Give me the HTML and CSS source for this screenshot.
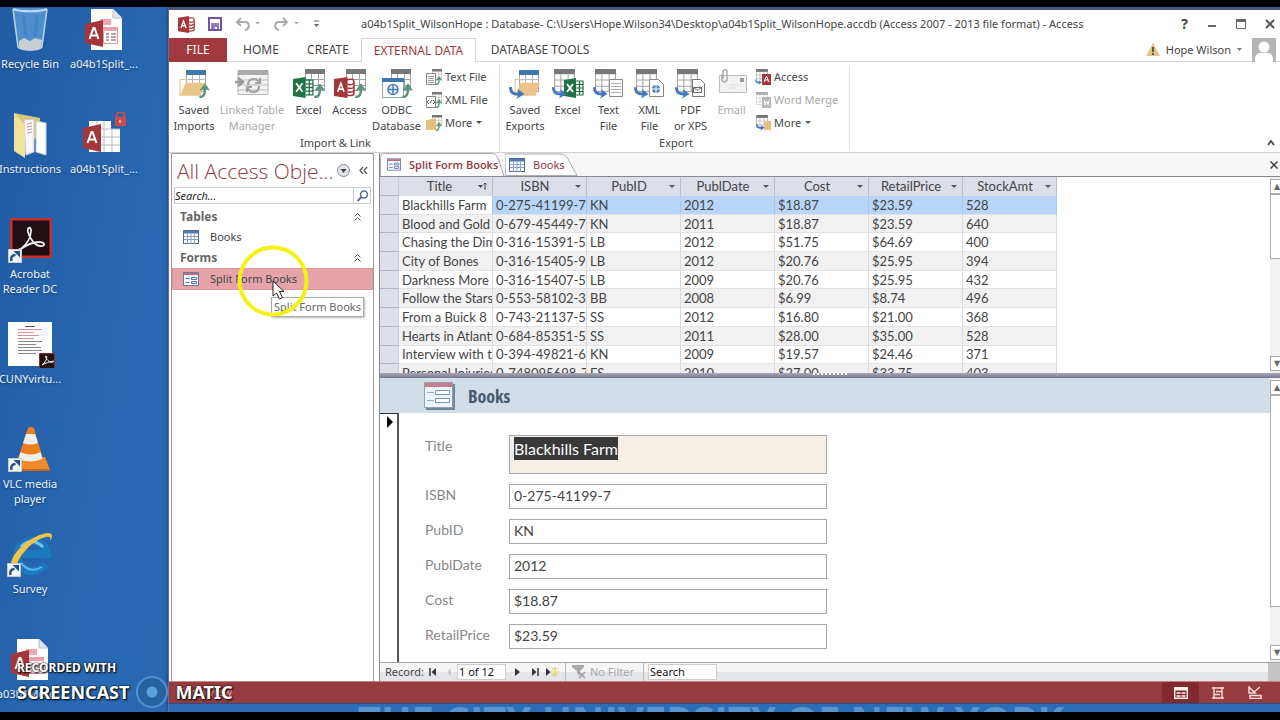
FILE: index.html
```html
<!DOCTYPE html>
<html lang="en">
<head>
<meta charset="utf-8">
<title>a04b1Split_WilsonHope - Access</title>
<link rel="stylesheet" href="styles.css">
</head>
<body>
<svg class="defs" aria-hidden="true">
  <symbol id="grid" viewBox="0 0 20 24"><rect x=".5" y=".5" width="19" height="21" fill="#fff" stroke="#a3a3a3"/><path d="M0 0h20v5H0z" fill="#777"/><path d="M0 10.500h20M0 16.500h20M6.500 5v17M13.500 5v17" stroke="#a3a3a3" fill="none"/></symbol>
  <symbol id="grid-blue" viewBox="0 0 20 24"><rect x=".5" y=".5" width="19" height="21" fill="#fff" stroke="#a3a3a3"/><path d="M0 0h20v5H0z" fill="#3f78ae"/><path d="M0 9.500h20M0 14.500h20M6.500 5v17M13.500 5v17" stroke="#b5b9c4" fill="none"/></symbol>
  <symbol id="up" viewBox="0 0 12 16"><path d="M1 15c5 0 6-3 6-9" stroke="#559578" stroke-width="2.600" fill="none"/><path d="M2 7.500 7 1l4.500 6.500-4-1.500z" fill="#559578" stroke="#559578"/></symbol>
  <symbol id="out" viewBox="0 0 16 13"><path d="M1.500 1c0 6 3 7.500 9 7" stroke="#4378c0" stroke-width="3" fill="none"/><path d="M8.500 3l7 5-8 5 2-5z" fill="#4378c0"/></symbol>
  <symbol id="abox" viewBox="0 0 20 20"><path d="M11 3c7-2 8 0 8 1v12c0 2-5 2-8 1" fill="#fff" stroke="#a4373a" stroke-width="1.500"/><path d="M13 7c3 1 5 0 6-1M13 10.500c3 1 5 0 6-1M13 14c3 1 5 0 6-1" stroke="#a4373a" fill="none" stroke-width="1.500"/><path d="M0 2 13 0v20L0 18z" fill="#a4373a"/><path d="M3.500 14 6.500 6l3 8M4.500 11.500h4" stroke="#fff" stroke-width="1.600" fill="none"/></symbol>
  <symbol id="xbox" viewBox="0 0 20 20"><path d="M12 3h7v14h-7M15.500 3v14M12 6.500h7M12 10h7M12 13.500h7" stroke="#1f7345" fill="#fff" stroke-width="1.200"/><path d="M0 2 12 0v20L0 18z" fill="#1f7345"/><path d="m3 6 6 8M9 6l-6 8" stroke="#fff" stroke-width="1.800"/></symbol>
  <symbol id="folder" viewBox="0 0 24 18"><path d="M1 17V2h5l2 2" fill="none" stroke="#e4c48d"/><path d="M6 5h18l-4 12H1z" fill="#e9c58b"/></symbol>
  <symbol id="form" viewBox="0 0 16 14"><rect x=".5" y=".5" width="15" height="13" fill="#f7f9ff" stroke="#6c7898"/><path d="M1 1h14v2H1z" fill="#b76c80"/><path d="M2.500 6.500h4m-4 4h4" stroke="#5a74a8"/><path d="M8.500 5.500h5v2h-5zm0 4h5v2h-5z" fill="#fff" stroke="#5a74a8"/></symbol>
  <symbol id="table" viewBox="0 0 16 14"><rect x=".5" y=".5" width="15" height="13" fill="#fff" stroke="#54698f"/><path d="M1 1h14v2.500H1z" fill="#5379b4"/><path d="M1 6.500h14M1 9.500h14M4.500 3v11M8 3v11M11.500 3v11" stroke="#8ba3cb" fill="none"/></symbol>
  <symbol id="sc" viewBox="0 0 14 14"><path d="M.5.500h13v13H.5z" fill="#f3f5f7" stroke="#c5ccd5"/><path d="M3.500 12c-1-4 1-6 4-6" stroke="#285089" stroke-width="2.500" fill="none"/><path d="M5.500 2H12v6.500z" fill="#285089"/></symbol>
  <symbol id="adoc" viewBox="0 0 38 44"><path d="M6 1h22l9 9v32H6z" fill="#fff"/><path d="M28 1v9h9" fill="#dfe5ef" stroke="#b0b9c8"/><path d="M15 11h11v6H15z" fill="#f0a6ad"/><path d="M18.500 19.500h14v16h-14z" fill="#fff" stroke="#dc9aa1"/><path d="M18 19h15v4H18z" fill="#eaa0a9"/><path d="M21 26h3m-3 3h3m-3 3h3m2-6h5m-5 3h5m-5 3h5" stroke="#b07b82" stroke-width="1.500"/><path d="m0 16 18-4v27L0 35z" fill="#a4373a"/><path d="m4.500 31 4-11h1l4 11M6.500 27.500h5" stroke="#fff" stroke-width="2" fill="none"/></symbol>
</svg>

<div class="screen">
  <div class="desktop">
    <aside class="shortcuts">
      <div class="shortcut-col first">
        <a class="shortcut" href="#"><svg width="38" height="46" viewBox="0 0 38 46"><path d="m24 40 10-1 2-3-3-2z" fill="#174a86" opacity=".6"/><path d="M2 1h34l-5 40c-3 4-20 4-24 0z" fill="#5f9fd9" opacity=".75"/><path d="M2 2c8 3 26 3 34 0" fill="none" stroke="#bcdcf2" stroke-width="2"/><path d="m2 2 5 38c5 4 19 4 24 0l5-38" fill="none" stroke="#bad3e6" stroke-width="1.500"/><path d="m8 34 5-3 6 3 5-3 7 2-1 8c-5 3-17 3-22 0z" fill="#c7cfd5"/><path d="m12 8 3 22m11-22-2 22" stroke="#3c79c0" stroke-width="3" opacity=".6"/></svg><span>Recycle Bin</span></a>
        <a class="shortcut" href="#"><svg width="36" height="46" viewBox="0 0 36 46"><path d="m2 1 26 5v12L14 42z" fill="#ddc876"/><path d="m12 8 10-1v33l-8 3z" fill="#f7f7fa" stroke="#c8cad2"/><path d="m24 9 10 2v32l-10-3z" fill="#fff" stroke="#c6ccd8"/><path d="m15 12 5-1m-5 4 5-1m-5 4 5-1m-5 4 5-1" stroke="#c997a0"/><path d="m2 1 11 12v33L2 39z" fill="#f0e19b"/></svg><span>Instructions</span></a>
        <a class="shortcut" href="#"><svg width="46" height="46" viewBox="0 0 46 46"><path d="M3 1h42v40H3z" fill="#c7302e"/><path d="M5.500 3.500h37v35h-37z" fill="#220f13"/><path d="M14 32c5-4 10-11 10-18 0-5-4-4-3 1 2 8 8 15 14 14 4-1 2-4-3-4-6 0-11 2-18 7-3 2-3 0 0 0z" fill="none" stroke="#eee" stroke-width="1.800"/><use href="#sc" x="1" y="32" width="14" height="14"/></svg><span>Acrobat<br>Reader DC</span></a>
        <a class="shortcut" href="#"><svg width="50" height="46" viewBox="0 0 50 46"><path d="M3 0h44v44H3z" fill="#fdfdfd"/><path d="M20 4.500h10" stroke="#555"/><path d="M13 7.500h24m-24 3h16m-16 3h21m-21 3h16" stroke="#db8d94"/><path d="M13 19.500h24m-24 3h18m-18 3h23m-23 3h24m-24 3h18" stroke="#888"/><path d="M34.500 31.500h15v15h-15z" fill="#251213" stroke="#8c2d2e"/><path d="M37 43c4-3 6-9 4-9s3 8 7 6-6 0-11 3z" fill="none" stroke="#fff"/></svg><span>CUNYvirtu...</span></a>
        <a class="shortcut" href="#"><svg width="44" height="46" viewBox="0 0 44 46"><path d="m10 30-6 13h38l-5-13z" fill="#f08a2c"/><path d="M3 42h39v2H3z" fill="#ca6618"/><path d="M20 1q3-2 6 0l9 31c-6 5-19 5-25 0z" fill="#f07d1c"/><path d="m18 7 9 0 3 9q-7 3-15 0zM12.500 25q10 5 20 0l2 7q-12 5-24 0z" fill="#eceef0"/><use href="#sc" x="0" y="31" width="14" height="14"/></svg><span>VLC media<br>player</span></a>
        <a class="shortcut" href="#"><svg width="46" height="46" viewBox="0 0 46 46"><path d="M38 32a15 15 0 1 1 2-10H16" fill="none" stroke="#1b79bd" stroke-width="8"/><path d="M14 15q10-11 22 0" stroke="#77c4ed" stroke-width="3" fill="none"/><path d="M14 31q9 11 21 4" stroke="#5fb3ea" stroke-width="2" fill="none"/><path d="M4 35C2 22 25 2 41 1c5 0 5 4 2 8 1-4 0-5-4-4C25 8 11 24 8 38" fill="#efc448"/><use href="#sc" x="0" y="31" width="14" height="14"/></svg><span>Survey</span></a>
        <a class="shortcut" href="#"><svg width="38" height="44"><use href="#adoc"/></svg><span>a03h1Merc...</span></a>
      </div>
      <div class="shortcut-col second">
        <a class="shortcut" href="#"><svg width="38" height="44"><use href="#adoc"/></svg><span>a04b1Split_...</span></a>
        <a class="shortcut" href="#"><svg width="44" height="46" viewBox="0 0 44 46"><path d="M7 9h22v8h9v23H7z" fill="#fff"/><path d="M7 17h31M7 25h31M7 33h31M22 9v31M30 17v23M15 9v31" stroke="#b3bcc8" fill="none"/><path d="m1 16 18-4v28L1 36z" fill="#a4373a"/><path d="m5.500 31 4-11h1l4 11M7.500 27.500h5" stroke="#fff" stroke-width="2" fill="none"/><path d="M34.500 6V4q0-4 4-4t4 4v3" fill="none" stroke="#c94c46" stroke-width="2"/><path d="M33 5h11v9H33z" fill="#c94c46"/><path d="M38 8v3" stroke="#fff"/></svg><span>a04b1Split_...</span></a>
      </div>
    </aside>

    <main class="window">
      <header class="titlebar">
        <div class="quick">
          <svg width="17" height="17"><use href="#abox"/></svg>
          <button aria-label="Save"><svg width="14" height="14" viewBox="0 0 14 14"><path d="M1 1h12v12H1z" fill="#fff" stroke="#7453a6" stroke-width="2"/><path d="M3 7h8M4 13v-4h6v4M6 10v3" stroke="#7453a6" stroke-width="1.500" fill="none"/></svg></button>
          <button aria-label="Undo"><svg width="26" height="14" viewBox="0 0 26 14"><path d="M2 5h8c5 0 5 7 0 8M6 1 2 5l4 4" fill="none" stroke="#aaa" stroke-width="2"/><path d="m20 5 2.500 2.500L25 5z" fill="#aaa"/></svg></button>
          <button aria-label="Redo"><svg width="26" height="14" viewBox="0 0 26 14"><path d="M13 5H5c-5 0-5 7 0 8M9 1l4 4-4 4" fill="none" stroke="#aaa" stroke-width="2"/><path d="m20 5 2.500 2.500L25 5z" fill="#aaa"/></svg></button>
          <button aria-label="Customize toolbar"><svg width="7" height="8" viewBox="0 0 7 8"><path d="M1 1h5" stroke="#666"/><path d="M1 4h5L3.500 7z" fill="#666"/></svg></button>
        </div>
        <h1>a04b1Split_WilsonHope : Database- C:\Users\Hope.Wilson34\Desktop\a04b1Split_WilsonHope.accdb (Access 2007 - 2013 file format) - Access</h1>
        <div class="win-buttons">
          <button class="help" aria-label="Help">?</button>
          <button aria-label="Minimize"><svg width="10" height="10"><path d="M1 7h8" stroke="#666" stroke-width="2"/></svg></button>
          <button aria-label="Restore"><svg width="10" height="10"><path d="M.5 1h9v8.500h-9z" fill="none" stroke="#666"/><path d="M0 1.500h10" stroke="#666" stroke-width="3"/></svg></button>
          <button aria-label="Close"><svg width="10" height="10"><path d="m1 1 8 8M9 1 1 9" stroke="#555" stroke-width="2"/></svg></button>
        </div>
      </header>

      <nav class="tabs">
        <button class="tab file">FILE</button><button class="tab home">HOME</button><button class="tab create">CREATE</button><button class="tab active">EXTERNAL DATA</button><button class="tab tools">DATABASE TOOLS</button>
        <div class="account"><svg width="14" height="13" viewBox="0 0 14 13"><path d="m7 0 7 13H0z" fill="#e2c384"/><path d="M7 4v5m0 1v2" stroke="#333" stroke-width="1.500"/></svg><button>Hope Wilson</button><svg width="5" height="3"><path d="M0 0h5L2.500 3z" fill="#777"/></svg><svg class="avatar" width="24" height="24" viewBox="0 0 24 24"><path d="M0 0h24v24H0z" fill="#b5b5b5"/><circle cx="12" cy="9" r="5.500" fill="#fff"/><path d="M3 24v-4q1-5 6-5h6q5 0 6 5v4z" fill="#fff"/></svg></div>
      </nav>

      <section class="ribbon">
        <div class="group import">
          <div class="tools-row">
            <button class="big wide-a"><svg width="32" height="30" viewBox="0 0 32 30"><use href="#grid-blue" x="8" y="1" width="20" height="24"/><use href="#folder" x="1" y="8" width="26" height="20"/><use href="#up" x="20" y="14" width="12" height="15"/></svg>Saved<br>Imports</button>
            <button class="big wide-b" disabled><svg width="34" height="30" viewBox="0 0 34 30"><path d="M3 1.500h30v24H3z" fill="#f3f3f3" stroke="#b5b5b5"/><path d="M3 1h30v5H3z" fill="#aaa"/><path d="M3 11h30M3 16h30M3 21h30" stroke="#bbb"/><path d="M0 13h7M3 9l5 4-5 4" stroke="#999" stroke-width="2.500" fill="none"/><path d="M13 16q0-6 6-6 4 0 5 4m1-5v5h-5m4 3q0 6-6 6-4 0-5-4m-1 4v-5h5" stroke="#a2a2a2" stroke-width="2.200" fill="none"/></svg>Linked Table<br>Manager</button>
            <button class="big wide-c"><svg width="32" height="30" viewBox="0 0 32 30"><use href="#grid" x="12" y="0" width="20" height="24"/><use href="#xbox" x="0" y="8" width="21" height="21"/><use href="#up" x="20" y="14" width="12" height="15"/></svg>Excel</button>
            <button class="big wide-c"><svg width="32" height="30" viewBox="0 0 32 30"><use href="#grid" x="12" y="0" width="20" height="24"/><use href="#abox" x="0" y="8" width="21" height="21"/><use href="#up" x="20" y="14" width="12" height="15"/></svg>Access</button>
            <button class="big wide-d"><svg width="32" height="30" viewBox="0 0 32 30"><use href="#grid" x="10" y="0" width="20" height="24"/><path d="M1.500 9.500h21v19h-21z" fill="#fff" stroke="#8fa3bd"/><path d="M1 9h22v4H1z" fill="#3f78ae"/><circle cx="12" cy="20.500" r="5" fill="#fff" stroke="#4378c0" stroke-width="1.500"/><path d="M7 20.500h10M12 15.500v10" stroke="#4378c0" stroke-width="1.500"/><use href="#up" x="20" y="14" width="12" height="15"/></svg>ODBC<br>Database</button>
            <div class="stack">
              <button class="small"><svg width="16" height="16" viewBox="0 0 16 16"><use href="#grid" x="6" y="0" width="10" height="12"/><path d="M.5 4.500h9v11h-9z" fill="#fff" stroke="#888"/><path d="M2 7.500h6m-6 2h6m-6 2h6m-6 2h6" stroke="#999"/><use href="#up" x="9" y="7" width="7" height="9"/></svg>Text File</button>
              <button class="small"><svg width="16" height="16" viewBox="0 0 16 16"><use href="#grid" x="6" y="0" width="10" height="12"/><path d="M.5 4.500h9v11h-9z" fill="#fff" stroke="#888"/><path d="m3 8-2 2 2 2m4-4 2 2-2 2m-3-1 2-3" stroke="#555" fill="none"/><use href="#up" x="9" y="7" width="7" height="9"/></svg>XML File</button>
              <button class="small"><svg width="16" height="16" viewBox="0 0 16 16"><use href="#grid" x="6" y="0" width="10" height="12"/><path d="M0 5h3l1-1h6v11H0z" fill="#e5c07d"/><use href="#up" x="9" y="7" width="7" height="9"/></svg>More <i class="caret"></i></button>
            </div>
          </div>
          <div class="group-name">Import &amp; Link</div>
        </div>
        <div class="group export">
          <div class="tools-row">
            <button class="big wide-a"><svg width="32" height="30" viewBox="0 0 32 30"><use href="#grid-blue" x="10" y="1" width="20" height="24"/><use href="#folder" x="5" y="8" width="26" height="20"/><use href="#out" x="0" y="17" width="16" height="13"/></svg>Saved<br>Exports</button>
            <button class="big wide-c"><svg width="32" height="30" viewBox="0 0 32 30"><use href="#grid" x="2" y="0" width="21" height="25"/><use href="#xbox" x="12" y="9" width="20" height="20"/><use href="#out" x="0" y="17" width="15" height="13"/></svg>Excel</button>
            <button class="big wide-c"><svg width="32" height="30" viewBox="0 0 32 30"><use href="#grid" x="2" y="0" width="21" height="25"/><path d="M16.500 10.500h13v17h-13z" fill="#fff" stroke="#888"/><path d="M18 14.500h10m-10 3h10m-10 3h10m-10 3h10" stroke="#aaa"/><use href="#out" x="0" y="17" width="15" height="13"/></svg>Text<br>File</button>
            <button class="big wide-c"><svg width="32" height="30" viewBox="0 0 32 30"><use href="#grid" x="2" y="0" width="21" height="25"/><path d="M15.500 10.500h9l5 5v12h-14z" fill="#fff" stroke="#888"/><circle cx="22" cy="20" r="4" fill="#5084bf"/><path d="M18 20h8m-4-4v8" stroke="#fff"/><use href="#out" x="0" y="17" width="15" height="13"/></svg>XML<br>File</button>
            <button class="big wide-c"><svg width="32" height="30" viewBox="0 0 32 30"><use href="#grid" x="2" y="0" width="21" height="25"/><path d="M17.500 10.500h8l4 4v13h-12z" fill="#fff" stroke="#777"/><path d="M18.500 18.500h8v5h-8zl4 3 4-3" fill="#fff" stroke="#666"/><use href="#out" x="0" y="17" width="15" height="13"/></svg>PDF<br>or XPS</button>
            <button class="big wide-c" disabled><svg width="32" height="30" viewBox="0 0 32 30"><path d="M3.500 6.500h27v17h-27z" fill="#f1f1f1" stroke="#bbb"/><path d="M24 9h4v4h-4z" fill="#999"/><path d="M13 16h10m-10 3h7" stroke="#ddd"/><path d="M6 5v6q2.500 4 5 0V2q-2-3-4 0v8" fill="none" stroke="#aaa" stroke-width="1.500"/></svg>Email</button>
            <div class="stack">
              <button class="small"><svg width="16" height="16" viewBox="0 0 16 16"><use href="#grid" x="1" y="0" width="12" height="14"/><path d="M7 5h9v11H7z" fill="#a4373a"/><path d="m9 13 2.500-6 2.500 6m-4-2h3" stroke="#fff" fill="none"/><use href="#out" x="0" y="10" width="7" height="6"/></svg>Access</button>
              <button class="small" disabled><svg width="16" height="16" viewBox="0 0 16 16" opacity=".6"><use href="#grid" x="1" y="0" width="12" height="14"/><path d="M7 5h9v11H7z" fill="#888"/><path d="m9 8 1 5 1.500-4 1.500 4 1-5" stroke="#fff" fill="none"/></svg>Word Merge</button>
              <button class="small"><svg width="16" height="16" viewBox="0 0 16 16"><use href="#grid" x="1" y="0" width="12" height="14"/><path d="M9 7h2l1-1h4v9H9z" fill="#e5c07d"/><use href="#out" x="1" y="8" width="9" height="8"/></svg>More <i class="caret"></i></button>
            </div>
          </div>
          <div class="group-name">Export</div>
        </div>
        <button class="collapse" aria-label="Collapse ribbon"><svg width="8" height="6"><path d="m1 5 3-4 3 4" fill="none" stroke="#555" stroke-width="2"/></svg></button>
      </section>

      <div class="work">
        <aside class="nav">
          <div class="nav-head"><h2>All Access Obje...</h2><button aria-label="Choose category"><svg width="13" height="13"><circle cx="6.500" cy="6.500" r="6" fill="#e3e4ea" stroke="#888d99"/><path d="M3.500 5h6l-3 4z" fill="#444"/></svg></button><button aria-label="Collapse pane"><svg width="9" height="7"><path d="M4 0 1 3.500 4 7M8 0 5 3.500 8 7" fill="none" stroke="#555" stroke-width="1.300"/></svg></button></div>
          <div class="nav-search"><input type="text" aria-label="Search objects" placeholder="Search..."><button aria-label="Search"><svg width="13" height="12"><circle cx="8" cy="4.500" r="3.500" fill="#fff" stroke="#567096" stroke-width="1.500"/><path d="m5.500 7-4 4" stroke="#567096" stroke-width="2"/></svg></button></div>
          <h3>Tables<svg width="7" height="8"><path d="m.5 3.500 3-3 3 3m-6 4 3-3 3 3" fill="none" stroke="#555"/></svg></h3>
          <a class="object" href="#"><svg width="16" height="14"><use href="#table"/></svg>Books</a>
          <h3>Forms<svg width="7" height="8"><path d="m.5 3.500 3-3 3 3m-6 4 3-3 3 3" fill="none" stroke="#555"/></svg></h3>
          <a class="object current" href="#"><svg width="16" height="14"><use href="#form"/></svg>Split Form Books
            <span class="tooltip">Split Form Books</span>
            <svg class="pointer" width="72" height="72" viewBox="0 0 72 72"><circle cx="36" cy="36" r="33.500" fill="none" stroke="#f5f016" stroke-width="4"/><path d="m36 36 0 15 3.500-3 3 6 3-1.500-3-6h4.500z" fill="#fff" stroke="#222"/></svg>
          </a>
        </aside>

        <section class="document">
          <div class="doc-tabs">
            <button class="doc-tab selected"><svg class="shape" viewBox="0 0 126 24" preserveAspectRatio="none"><path d="M.5 24V5Q.5.500 5 .5h107q5 0 7 5l6 18.500" fill="#fff" stroke="#aaa5a8"/></svg><svg width="14" height="13"><use href="#form"/></svg><span>Split Form Books</span></button>
            <button class="doc-tab other"><svg class="shape" viewBox="0 0 76 24" preserveAspectRatio="none"><path d="M1 23.500Q0 20 0 1h58q6 0 9 8l8 14.500z" fill="#fff" stroke="#aaa"/></svg><svg width="16" height="14"><use href="#table"/></svg><span>Books</span></button>
            <button class="doc-close" aria-label="Close document"><svg width="8" height="8"><path d="m.5.500 7 7m0-7-7 7" stroke="#444" stroke-width="1.500"/></svg></button>
          </div>
          <div class="sheet">
            <div class="sheet-view">
              <table>
                <thead><tr><th class="sel"></th><th><div><span>Title</span><svg width="9" height="8"><path d="M0 3h5L2.500 6z" fill="#444"/><path d="M7 8V1M5.500 2.500 7 1l1.500 1.500" stroke="#444" fill="none"/></svg></div></th><th><div><span>ISBN</span><i class="caret"></i></div></th><th><div><span>PubID</span><i class="caret"></i></div></th><th><div><span>PublDate</span><i class="caret"></i></div></th><th><div><span>Cost</span><i class="caret"></i></div></th><th><div><span>RetailPrice</span><i class="caret"></i></div></th><th><div><span>StockAmt</span><i class="caret"></i></div></th></tr></thead>
                <tbody>
                  <tr class="picked"><td class="sel"></td><td>Blackhills Farm</td><td>0-275-41199-7</td><td>KN</td><td>2012</td><td>$18.87</td><td>$23.59</td><td>528</td></tr>
                  <tr><td class="sel"></td><td>Blood and Gold</td><td>0-679-45449-7</td><td>KN</td><td>2011</td><td>$18.87</td><td>$23.59</td><td>640</td></tr>
                  <tr><td class="sel"></td><td>Chasing the Dime</td><td>0-316-15391-5</td><td>LB</td><td>2012</td><td>$51.75</td><td>$64.69</td><td>400</td></tr>
                  <tr><td class="sel"></td><td>City of Bones</td><td>0-316-15405-9</td><td>LB</td><td>2012</td><td>$20.76</td><td>$25.95</td><td>394</td></tr>
                  <tr><td class="sel"></td><td>Darkness More</td><td>0-316-15407-5</td><td>LB</td><td>2009</td><td>$20.76</td><td>$25.95</td><td>432</td></tr>
                  <tr><td class="sel"></td><td>Follow the Stars</td><td>0-553-58102-3</td><td>BB</td><td>2008</td><td>$6.99</td><td>$8.74</td><td>496</td></tr>
                  <tr><td class="sel"></td><td>From a Buick 8</td><td>0-743-21137-5</td><td>SS</td><td>2012</td><td>$16.80</td><td>$21.00</td><td>368</td></tr>
                  <tr><td class="sel"></td><td>Hearts in Atlantis</td><td>0-684-85351-5</td><td>SS</td><td>2011</td><td>$28.00</td><td>$35.00</td><td>528</td></tr>
                  <tr><td class="sel"></td><td>Interview with the</td><td>0-394-49821-6</td><td>KN</td><td>2009</td><td>$19.57</td><td>$24.46</td><td>371</td></tr>
                  <tr><td class="sel"></td><td>Personal Injuries</td><td>0-748095698-7</td><td>FS</td><td>2010</td><td>$27.00</td><td>$33.75</td><td>403</td></tr>
                </tbody>
              </table>
            </div>
            <div class="scroll"><b class="arrow">▲</b><i class="thumb short"></i><b class="arrow end">▼</b></div>
          </div>
          <div class="splitter"><i></i></div>
          <div class="form-area">
            <div class="form-main">
              <div class="form-head"><svg width="31" height="28" viewBox="0 0 31 28"><path d="M2 2h29v26H2z" fill="#73859a"/><path d="M.5.500h28v25H.5z" fill="#edf4fc" stroke="#91a1b5"/><path d="M1 1h27v4H1z" fill="#c87b91"/><path d="M3 10.500h7m-7 8h7" stroke="#8dabc9"/><path d="M11.500 8.500h14v4h-14zm0 8h14v4h-14z" fill="#fff" stroke="#7598be"/></svg><h2>Books</h2></div>
              <div class="form-body">
                <div class="record-bar"><svg width="6" height="12"><path d="m0 0 6 6-6 6z" fill="#000"/></svg></div>
                <form class="fields">
                  <label for="f1">Title</label><textarea id="f1" spellcheck="false">Blackhills Farm</textarea>
                  <label for="f2">ISBN</label><input id="f2" type="text" value="0-275-41199-7">
                  <label for="f3">PubID</label><input id="f3" type="text" value="KN">
                  <label for="f4">PublDate</label><input id="f4" type="text" value="2012">
                  <label for="f5">Cost</label><input id="f5" type="text" value="$18.87">
                  <label for="f6">RetailPrice</label><input id="f6" type="text" value="$23.59">
                </form>
              </div>
            </div>
            <div class="scroll"><b class="arrow">▲</b><i class="thumb long"></i><b class="arrow end">▼</b></div>
          </div>
          <div class="record-nav">
            <label for="rec">Record:</label>
            <button aria-label="First record"><svg width="7" height="8"><path d="M1 0v8" stroke="#333" stroke-width="1.500"/><path d="M7 0v8L2.500 4z" fill="#333"/></svg></button>
            <button aria-label="Previous record"><svg width="4" height="8"><path d="M4 0v8L0 4z" fill="#ccc"/></svg></button>
            <input id="rec" class="rec" type="text" value="1 of 12">
            <button class="next" aria-label="Next record"><svg width="5" height="8"><path d="M0 0v8l5-4z" fill="#333"/></svg></button>
            <button aria-label="Last record"><svg width="7" height="8"><path d="M6 0v8" stroke="#333" stroke-width="1.500"/><path d="M0 0v8l4.500-4z" fill="#333"/></svg></button>
            <button class="new" aria-label="New record"><svg width="13" height="10"><path d="M0 1v8l4.500-4z" fill="#333"/><path d="M6 2h6M5 5h8M6 8h6M9 0v10" stroke="#e4da55" stroke-width="1.500" stroke-dasharray="2 1"/></svg></button>
            <button class="filter" disabled><svg width="15" height="14"><path d="M0 0h12v2L8 6v5L5 8V6L0 2z" fill="#aaa"/><path d="m7 7 6 6m0-6-6 6" stroke="#999" stroke-width="1.300"/></svg>No Filter</button>
            <input class="find" type="text" aria-label="Search records" value="Search">
            <i class="corner"></i>
          </div>
        </section>
      </div>

      <footer class="status"><span>Form View</span>
        <button class="on" aria-label="Form view"><svg width="14" height="12"><path d="M.7.700h12.600v10.600H.7z" fill="none" stroke="#fff0ec" stroke-width="1.400"/><path d="M0 2h14" stroke="#fff0ec" stroke-width="3"/><path d="M2.500 6h4m1 0h4m-9 3h4m1 0h4" stroke="#fff0ec" stroke-width="1.500"/></svg></button>
        <button aria-label="Layout view"><svg width="12" height="12"><path d="M0 1h12M0 11h12M2 0v12M10 0v12M4 4.500h6M2 7.500h6" stroke="#ffdcd8" stroke-width="1.400" fill="none"/></svg></button>
        <button aria-label="Design view"><svg width="14" height="13"><path d="M1 0v7h6L1 1M6 6l6-5M2 9.500h11v3H2z" stroke="#ffdcd8" stroke-width="1.500" fill="none"/></svg></button>
      </footer>
      <div class="wallpaper"><span>THE CITY UNIVERSITY OF NEW YORK</span></div>
    </main>
  </div>

  <div class="watermark"><small>RECORDED WITH</small><div>SCREENCAST<svg width="34" height="34" viewBox="0 0 34 34"><circle cx="17" cy="17" r="15" fill="#245b94" fill-opacity=".55" stroke="#5195d4" stroke-width="2"/><circle cx="17" cy="17" r="5.500" fill="#5b9fdd"/></svg>MATIC</div></div>
</div>
<script src="select.js"></script>
</body>
</html>
```
FILE: select.js
```js
const title = document.getElementById("f1");
title.focus({ preventScroll: true });
title.select();
```
FILE: styles.css
```css
* { box-sizing: border-box; }
html, body { height: 100%; margin: 0; }
body { font: 11px/16px "Noto Sans", sans-serif; color: #444; background: #000; overflow: hidden; }
button, input, textarea { font: inherit; color: inherit; border: 0; padding: 0; margin: 0; background: none; border-radius: 0; }
input, textarea { min-width: 0; outline: none; }
button, a { display: flex; align-items: center; white-space: nowrap; }
a { color: inherit; text-decoration: none; }
h1, h2, h3 { margin: 0; font-weight: 400; }
svg { flex: none; display: block; }
.defs { position: absolute; width: 0; height: 0; }
.caret { flex: none; border: 3px solid transparent; border-top-color: #555; border-bottom: 0; }

.screen { position: relative; height: 100vh; padding: 7px 0 8px; overflow: hidden; }
.desktop { display: flex; height: 100%; background: linear-gradient(100deg, #215ca4, #2968b2 14%, #2b6ab1); overflow: hidden; }

.shortcuts { flex: 0 0 168px; display: flex; overflow: hidden; color: #edf5fd; }
.shortcut-col { display: grid; grid-auto-rows: 105px; align-content: start; }
.shortcut-col.first { grid-template-columns: 60px; }
.shortcut-col.second { grid-template-columns: 88px; }
.shortcut { flex-direction: column; gap: 3px; text-align: center; line-height: 15px; text-shadow: 0 1px 2px #123b70; }
.shortcut > svg { height: 46px; }

.window { flex: 1; min-width: 0; display: flex; flex-direction: column; background: #fff; border-top: 3px solid #46547f; border-left: 1px solid #6d6a8a; box-shadow: 0 0 4px #173660; }
.titlebar { display: flex; align-items: center; height: 28px; flex: none; }
.quick { flex: 0 0 186px; display: flex; align-items: center; gap: 13px; padding-left: 9px; }
.titlebar h1 { flex: 1; min-width: 0; padding-left: 6px; font-size: 11px; line-height: 16px; white-space: nowrap; }
.win-buttons { display: flex; align-items: center; gap: 19px; padding-right: 5px; }
.help { font-weight: 700; font-size: 14px; }

.tabs { display: flex; height: 24px; flex: none; border-bottom: 1px solid #d5d5d5; }
.tab { justify-content: center; height: 24px; font-size: 12px; }
.file { width: 58px; background: #a03a3f; color: #fff; }
.home { width: 68px; }
.create { width: 66px; }
.active { width: 115px; color: #a4373a; background: #fff; border: 1px solid #d5d5d5; border-bottom: 0; }
.tools { width: 128px; }
.account { display: flex; align-items: center; gap: 6px; margin-left: auto; padding-right: 4px; }
.account .avatar { margin-left: 4px; }

.ribbon { display: flex; height: 91px; flex: none; padding: 3px 0 1px; border-bottom: 1px solid #d0d0d0; }
.group { display: flex; flex-direction: column; border-right: 1px solid #e0e0e0; padding-left: 3px; }
.import { width: 331px; }
.export { width: 350px; }
.tools-row { display: flex; flex: 1; }
.big { flex-direction: column; height: 70px; padding-top: 4px; line-height: 16px; text-align: center; }
.big svg { margin-bottom: 3px; }
.big:disabled, .small:disabled, .filter:disabled { color: #aaa; }
.wide-a { width: 44px; }
.wide-b { width: 72px; }
.wide-c { width: 41px; }
.wide-d { width: 53px; }
.stack { display: grid; grid-auto-rows: 23px; padding-left: 3px; }
.group-name { text-align: center; line-height: 16px; }
.small { gap: 3px; }
.small .caret { margin-left: 1px; }
.collapse { margin-left: auto; align-self: flex-end; padding: 0 5px 5px; }

.work { flex: 1; min-height: 0; display: flex; }
.nav { flex: 0 0 203px; min-width: 0; margin-left: 2px; border: 1px solid #9a9a9f; border-bottom: 0; }
.nav-head { display: flex; align-items: center; gap: 9px; height: 33px; padding: 0 5px; }
.nav-head h2 { flex: 1; min-width: 0; color: #8d3c45; font: 300 21px/30px "Open Sans", sans-serif; white-space: nowrap; }
.nav-search { display: flex; height: 17px; margin: 0 2px; border: 1px solid #c9cbd4; }
.nav-search input { flex: 1; font: italic 11px/15px "Noto Sans", sans-serif; }
.nav-search input::placeholder { color: #222; opacity: 1; }
.nav-search button { flex: none; width: 17px; justify-content: center; border-left: 1px solid #ccd; }
.nav h3 { display: flex; justify-content: space-between; align-items: center; height: 21px; padding: 0 12px 0 8px; font-size: 12px; font-weight: 700; color: #666; }
.nav .nav-search + h3 { margin-top: 2px; }
.object { position: relative; gap: 11px; height: 20px; padding-left: 11px; }
.current { height: 22px; background: #e6a4a9; border: 1px solid #dc969c; padding-left: 10px; }
.tooltip { position: absolute; left: 98px; top: 28px; padding: 0 2px; line-height: 18px; background: #fff; border: 1px solid #aaa; box-shadow: 1px 1px 2px #bbb; color: #666; }
.pointer { position: absolute; left: 64px; top: -24px; }

.document { flex: 1; min-width: 0; margin-left: 5px; display: flex; flex-direction: column; border-left: 1px solid #88868f; }
.doc-tabs { display: flex; align-items: stretch; height: 24px; flex: none; background: #f6f6f7; border-bottom: 1px solid #898791; color: #8f3740; }
.doc-tab { position: relative; gap: 8px; padding-left: 7px; }
.doc-tab .shape { position: absolute; inset: 0; width: 100%; height: 100%; }
.doc-tab > svg, .doc-tab span { position: relative; }
.selected { width: 125px; font: 600 11px/16px "Open Sans", sans-serif; }
.other { width: 73px; padding-left: 4px; }
.doc-close { margin-left: auto; padding-right: 2px; }

.sheet { display: flex; flex: 0 0 196px; min-height: 0; overflow: hidden; }
.sheet-view { flex: 1; overflow: hidden; font-family: Lato, sans-serif; font-size: 13px; }
table { table-layout: fixed; width: 677px; height: 206px; border-collapse: separate; border-spacing: 0; }
th, td { padding: 0 0 0 3px; width: 94px; line-height: 16px; overflow: hidden; white-space: nowrap; text-align: left; font-weight: 400; border-right: 1px solid #d8dade; border-bottom: 1px solid #e2e2e4; }
th { height: 19px; background: #dcdfe7; border-right-color: #b9bdc7; border-bottom-color: #dcdfe7; }
th div { display: flex; align-items: center; padding-right: 5px; }
th span { flex: 1; text-align: center; padding-right: 1px; }
.sel { width: 19px; padding: 0; background: #dde0e8; border-bottom-color: #aeb5c1; border-right-color: #c8ccd5; }
tbody tr:nth-child(even) td:not(.sel) { background: #f1f1f2; }
.picked td:not(.sel) { background: #b9d6fa; border-right-color: #a9c8f0; }
.picked td.sel + td { background: #fff; }
.picked td.sel + td:not(.sel) { background: #fff; }

.scroll { flex: 0 0 10px; overflow: hidden; display: flex; flex-direction: column; background: #f1f1f1; padding: 2px 0; }
.arrow { flex: none; width: 17px; height: 15px; border: 1px solid #aaa; background: #fff; font: 8px/13px "DejaVu Sans", sans-serif; color: #666; padding-left: 3px; }
.arrow.end { margin-top: auto; }
.thumb { width: 17px; background: #fff; border: 1px solid #aaa; }
.short { height: 65px; }
.long { height: 212px; }
.splitter { flex: none; height: 5px; background: linear-gradient(#aaa9b8, #77758a); display: flex; justify-content: center; }
.splitter i { width: 34px; height: 3px; border-top: 2px dotted #fff; }

.form-area { flex: 1; min-height: 0; display: flex; }
.form-main { flex: 1; min-width: 0; display: flex; flex-direction: column; }
.form-head { display: flex; align-items: center; gap: 13px; height: 35px; flex: none; padding-left: 44px; background: #d1dee7; }
.form-head h2 { font: 700 18px/24px "Open Sans", sans-serif; font-stretch: condensed; color: #465a70; }
.form-body { flex: 1; min-height: 0; display: flex; overflow: hidden; }
.record-bar { flex: 0 0 19px; display: flex; justify-content: flex-end; padding: 2px 4px 0 0; border-top: 1px solid #333; border-right: 2px solid #555; }
.fields { flex: 1; display: grid; grid-template-columns: 84px 318px; grid-template-rows: 39px; grid-auto-rows: 25px; row-gap: 10px; align-content: start; padding: 22px 0 0 26px; font: 14px/18px Lato, sans-serif; }
.fields label { color: #888; padding-top: 2px; }
.fields input, .fields textarea { border: 1px solid #a8a8a8; padding: 0 4px; width: 100%; height: 100%; }
.fields input { padding-bottom: 2px; }
.fields textarea { resize: none; overflow: hidden; background: #f6efe8; padding-top: 1px; font-size: 16px; line-height: 23px; }
.fields textarea::selection { background: #393939; color: #fff; }

.record-nav { display: flex; align-items: center; height: 19px; flex: none; padding-left: 5px; border-top: 1px solid #a5a5a5; background: linear-gradient(#f5f5f5 50%, #e4e5e9 50%); }
.record-nav label { width: 44px; }
.record-nav button { margin-right: 11px; }
.record-nav input { height: 16px; background: #fff; border: 1px solid #ccc; padding: 0 1px; color: #111; }
.record-nav button:nth-of-type(2) { margin-right: 6px; }
.rec { width: 49px; }
.record-nav .next { margin-left: 9px; margin-right: 12px; }
.record-nav button:nth-of-type(4) { margin-right: 7px; }
.record-nav .new { margin-right: 6px; }
.record-nav .filter { gap: 3px; width: 79px; height: 18px; padding-left: 6px; margin-right: 4px; border: 1px solid #bbb; border-width: 0 1px; }
.find { width: 69px; }
.corner { margin-left: auto; width: 12px; height: 18px; background: #c3c3c3; }

.status { display: flex; align-items: stretch; height: 22px; flex: none; padding-left: 9px; background: #963b3e; border-top: 1px solid #c58384; color: #d9a5a7; line-height: 20px; }
.status span { flex: 1; }
.status button { width: 37px; justify-content: center; }
.status .on { background: #82292d; }
.status button:last-child { margin-right: 7px; }
.wallpaper { flex: none; height: 9px; overflow: hidden; background: #2d6db5; border-top: 1px solid #25508b; text-align: center; color: #5a93d0; font: 700 40px/32px "Open Sans", sans-serif; white-space: nowrap; padding-right: 27px; }

.watermark { position: absolute; left: 17px; bottom: 11px; color: #fff; font: 700 18px/34px "Noto Sans", sans-serif; text-shadow: 1px 1px 2px #000, 0 0 2px #000; }
.watermark small { display: block; font-size: 12px; line-height: 14px; }
.watermark div { display: flex; align-items: center; gap: 6px; }
```
